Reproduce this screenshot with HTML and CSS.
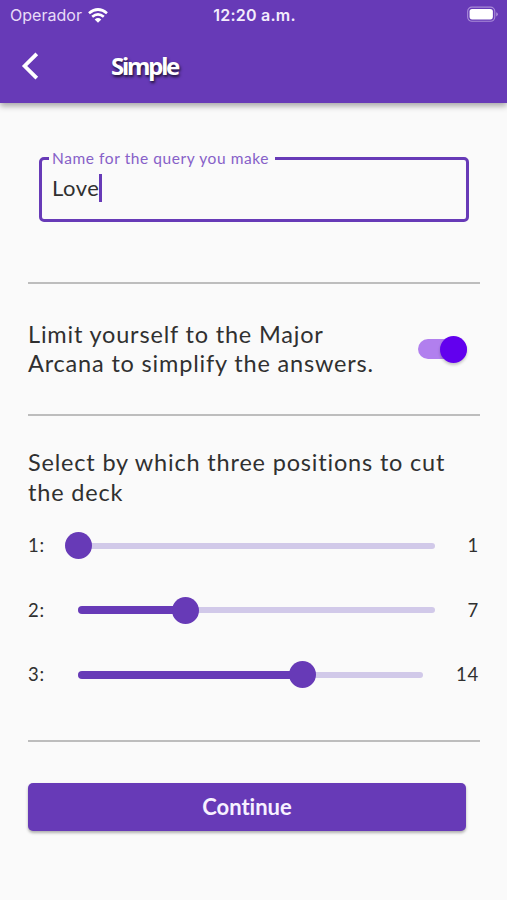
FILE: index.html
```html
<!DOCTYPE html>
<html lang="en">
<head>
<meta charset="utf-8">
<title>Simple</title>
<link rel="stylesheet" href="styles.css">
</head>
<body>
<header class="top">
  <div class="status">
    <div class="carrier"><span class="operator">Operador</span>
      <svg class="wifi" width="20" height="15" viewBox="0 0 20 15"><g fill="none" stroke="#fff" stroke-width="2.7"><path d="M1 5.2Q10-2.2 19 5.2"/><path d="M4.2 8.7Q10 3.9 15.8 8.7"/></g><path fill="#fff" d="M6.7 11.4Q10 8.6 13.3 11.4L10 14.8Z"/></svg>
    </div>
    <span class="clock">12:20 a.m.</span>
    <svg class="battery" width="32" height="17" viewBox="0 0 34 17"><rect x=".7" y=".7" width="28.8" height="15" rx="4.5" fill="none" stroke="#a98bd8" stroke-width="1.2"/><rect x="2.7" y="2.7" width="24.8" height="11" rx="2.7" fill="#fff"/><path d="M31 6v4.5q1.8-.6 1.8-2.25T31 6Z" fill="#a98bd8"/></svg>
  </div>
  <div class="bar">
    <svg class="back" width="18" height="28" viewBox="0 0 18 28"><path d="M15.8 1.8 3.6 14l12.2 12.2" fill="none" stroke="#fff" stroke-width="3.8"/></svg>
    <h1 class="title">Simple</h1>
  </div>
</header>
<main class="content">
  <fieldset class="field">
    <legend class="label">Name for the query you make</legend>
    <div class="value"><span class="value-text">Love</span><i class="caret"></i></div>
  </fieldset>
  <section class="limit">
    <p class="text">Limit yourself to the Major<br>Arcana to simplify the answers.</p>
    <div class="switch"><i class="knob"></i></div>
  </section>
  <section class="cut">
    <p class="text">Select by which three positions to cut<br>the deck</p>
    <div class="slider"><span class="num">1:</span><div class="track"><i class="fill" style="width:0%"></i><i class="thumb"></i></div><span class="num">1</span></div>
    <div class="slider"><span class="num">2:</span><div class="track"><i class="fill" style="width:30%"></i><i class="thumb"></i></div><span class="num">7</span></div>
    <div class="slider wide"><span class="num">3:</span><div class="track"><i class="fill" style="width:65%"></i><i class="thumb"></i></div><span class="num">14</span></div>
  </section>
  <button class="continue">Continue</button>
</main>
</body>
</html>
```
FILE: styles.css
```css
* { box-sizing: border-box; }
body { margin: 0; height: 900px; overflow: hidden; background: #fafafa; color: #303030; font-family: Lato, "Noto Sans", sans-serif; font-variant-ligatures: none; }
svg { display: block; }
.top { height: 103px; background: #673ab7; color: #fff; box-shadow: 0 3px 6px rgba(0,0,0,.34); }
.status { height: 30px; padding: 0 8px 0 10px; display: grid; grid-template-columns: 1fr auto 1fr; align-items: center; font-family: Inter, sans-serif; }
.carrier { display: flex; align-items: center; gap: 6px; font-size: 16px; color: #e7dcf7; }
.operator { letter-spacing: .02px; }
.clock { font-size: 16px; font-weight: 600; letter-spacing: .25px; color: #f3ecfc; }
.battery { justify-self: end; margin-bottom: 2px; }
.bar { height: 71px; padding-left: 21px; display: flex; align-items: center; }
.title { margin: 0 0 0 72px; font-size: 24px; line-height: 30px; font-family: "Noto Sans", sans-serif; font-weight: 700; letter-spacing: -2.2px; text-shadow: 1px 2px 3px rgba(0,0,0,.75); }
.content { padding: 46px 27px 0 28px; }
.field { height: 73px; margin: 0 11px 60px; padding: 0 0 0 10px; border: 3px solid #673ab7; border-radius: 5px; min-width: 0; }
.label { margin-left: -3px; padding: 0 6px 0 3px; height: 19px; line-height: 19px; font-size: 15.5px; letter-spacing: .58px; color: #8660c8; white-space: nowrap; }
.value { height: 39px; display: flex; align-items: center; font-size: 22px; letter-spacing: .5px; }
.caret { width: 3px; height: 28px; background: #673ab7; }
.limit { height: 134px; border: solid #bdbdbd; border-width: 2px 0; padding-right: 13px; display: flex; align-items: center; justify-content: space-between; }
.text { margin: 0; font-size: 23.5px; line-height: 29.5px; letter-spacing: .82px; white-space: nowrap; }
.switch { width: 49px; height: 20px; border-radius: 10px; background: #b17fee; display: flex; align-items: center; justify-content: flex-end; }
.knob { width: 27px; height: 27px; border-radius: 50%; background: #6200ee; box-shadow: 0 2px 3px rgba(0,0,0,.22); }
.cut { height: 326px; padding-top: 32px; border-bottom: 2px solid #bdbdbd; }
.slider { height: 64.5px; display: grid; grid-template-columns: 50px 357px 1fr; align-items: center; font-size: 18.5px; letter-spacing: .8px; }
.wide { grid-template-columns: 50px 345px 1fr; }
.cut .text { margin-bottom: 6.5px; }
.num { margin-top: -1px; }
.num:last-child { text-align: right; padding-right: 1px; }
.track { height: 6px; border-radius: 3px; background: #d1c9e9; display: flex; align-items: center; }
.fill { height: 8px; border-radius: 4px; background: #673ab7; }
.thumb { flex: none; width: 27px; height: 27px; margin-left: -13.5px; border-radius: 50%; background: #673ab7; }
.continue { display: block; width: 438px; height: 48px; margin-top: 41px; padding: 0; border: 0; border-radius: 5px; background: #673ab7; color: #f7f1ff; font: 700 22px/48px Lato, sans-serif; font-variant-ligatures: none; box-shadow: 0 2px 3px rgba(0,0,0,.3); }
```
